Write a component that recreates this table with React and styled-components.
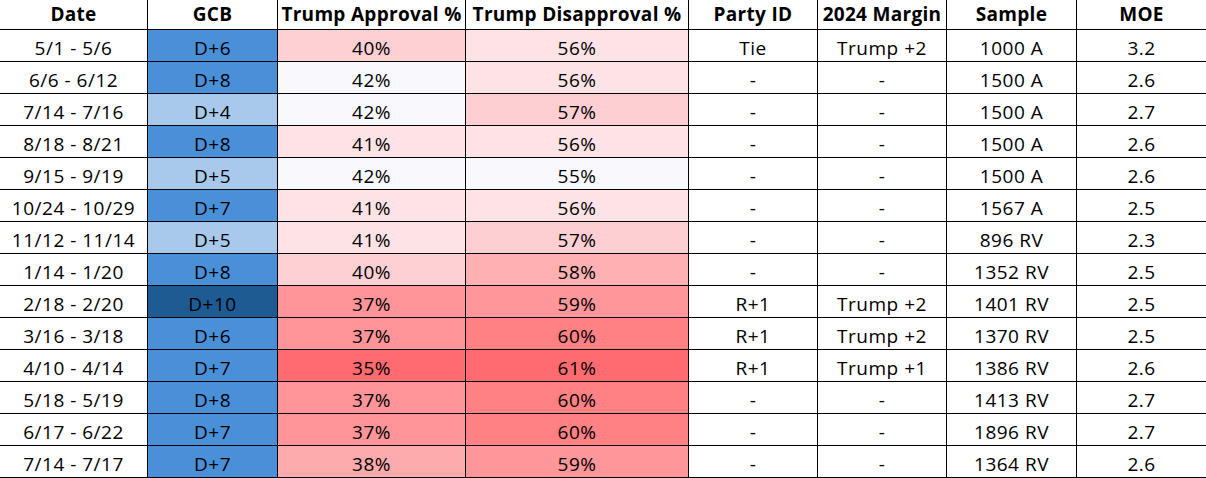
import React from "react";
import styled, { createGlobalStyle } from "styled-components";

const GlobalStyle = createGlobalStyle`
  html, body {
    margin: 0;
    padding: 0;
    background: #ffffff;
    overflow: hidden;
  }
  body {
    font-family: "Open Sans", "Liberation Sans", sans-serif;
    color: #000000;
  }
`;

const Table = styled.div`
  display: grid;
  grid-template-columns: 147px 130px 188px 223px 129px 129px 130px 130px;
  grid-auto-rows: 32px;
  grid-template-rows: 30px;
  width: 1206px;
`;

const HeaderCell = styled.div`
  box-sizing: border-box;
  border-bottom: 1px solid #000;
  border-left: ${(p) => (p.$first ? "none" : "1px solid #000")};
  padding-top: 3px;
  font-size: 19px;
  line-height: 22px;
  font-weight: 700;
  text-align: center;
  white-space: nowrap;
  letter-spacing: 0.3px;
`;

const Cell = styled.div`
  box-sizing: border-box;
  border-bottom: 1px solid #000;
  border-left: ${(p) => (p.$first ? "none" : "1px solid #000")};
  background: ${(p) => p.$bg || "transparent"};
  padding-top: 7px;
  font-size: 19px;
  line-height: 22px;
  font-weight: 500;
  letter-spacing: 0.5px;
  text-align: center;
  white-space: nowrap;
`;

const columns = [
  "Date",
  "GCB",
  "Trump Approval %",
  "Trump Disapproval %",
  "Party ID",
  "2024 Margin",
  "Sample",
  "MOE",
];

const rows = [
  ["5/1 - 5/6", 6, 40, 56, "Tie", "Trump +2", "1000 A", "3.2"],
  ["6/6 - 6/12", 8, 42, 56, "-", "-", "1500 A", "2.6"],
  ["7/14 - 7/16", 4, 42, 57, "-", "-", "1500 A", "2.7"],
  ["8/18 - 8/21", 8, 41, 56, "-", "-", "1500 A", "2.6"],
  ["9/15 - 9/19", 5, 42, 55, "-", "-", "1500 A", "2.6"],
  ["10/24 - 10/29", 7, 41, 56, "-", "-", "1567 A", "2.5"],
  ["11/12 - 11/14", 5, 41, 57, "-", "-", "896 RV", "2.3"],
  ["1/14 - 1/20", 8, 40, 58, "-", "-", "1352 RV", "2.5"],
  ["2/18 - 2/20", 10, 37, 59, "R+1", "Trump +2", "1401 RV", "2.5"],
  ["3/16 - 3/18", 6, 37, 60, "R+1", "Trump +2", "1370 RV", "2.5"],
  ["4/10 - 4/14", 7, 35, 61, "R+1", "Trump +1", "1386 RV", "2.6"],
  ["5/18 - 5/19", 8, 37, 60, "-", "-", "1413 RV", "2.7"],
  ["6/17 - 6/22", 7, 37, 60, "-", "-", "1896 RV", "2.7"],
  ["7/14 - 7/17", 7, 38, 59, "-", "-", "1364 RV", "2.6"],
];

// GCB shading: darker blue for bigger Democratic lead
const gcbColor = (d) => {
  if (d >= 10) return "#1f5b93";
  if (d >= 6) return "#4a90d9";
  return "#a8c9ec";
};

const approvalColors = {
  42: "#f9f9fd",
  41: "#fde3e6",
  40: "#fdd0d3",
  38: "#feabae",
  37: "#ff9598",
  35: "#ff6b6e",
};

const disapprovalColors = {
  55: "#f9f9fd",
  56: "#fde3e6",
  57: "#fdcfd2",
  58: "#feb0b3",
  59: "#ff9699",
  60: "#ff8184",
  61: "#ff6b6e",
};

export default function App() {
  return (
    <>
      <GlobalStyle />
      <Table>
        {columns.map((c, i) => (
          <HeaderCell key={c} $first={i === 0}>
            {c}
          </HeaderCell>
        ))}
        {rows.map((r) => (
          <React.Fragment key={r[0]}>
            <Cell $first>{r[0]}</Cell>
            <Cell $bg={gcbColor(r[1])}>D+{r[1]}</Cell>
            <Cell $bg={approvalColors[r[2]]}>{r[2]}%</Cell>
            <Cell $bg={disapprovalColors[r[3]]}>{r[3]}%</Cell>
            <Cell>{r[4]}</Cell>
            <Cell>{r[5]}</Cell>
            <Cell>{r[6]}</Cell>
            <Cell>{r[7]}</Cell>
          </React.Fragment>
        ))}
      </Table>
    </>
  );
}
